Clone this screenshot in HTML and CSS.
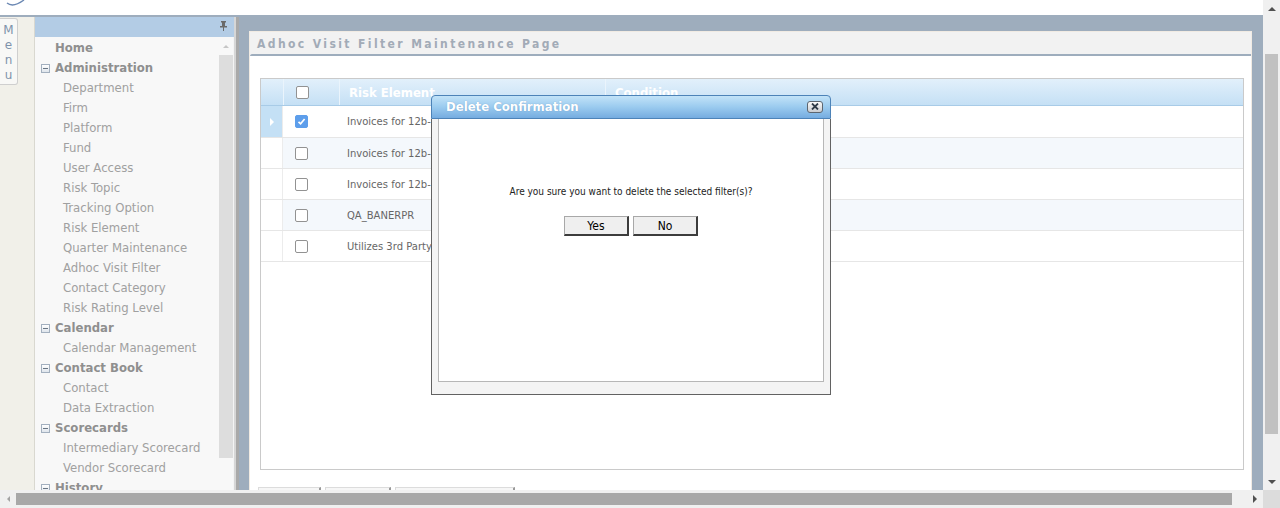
FILE: index.html
```html
<!DOCTYPE html>
<html>
<head>
<meta charset="utf-8">
<title>Adhoc Visit Filter Maintenance Page</title>
<link rel="stylesheet" href="styles.css">
</head>
<body>
<div class="viewport">
  <div class="content">
    <div class="topstrip">
      <svg class="logo" width="40" height="15" viewBox="0 0 40 15"><path d="M7 3 Q13 8 24 0" fill="none" stroke="#6b88b3" stroke-width="1.4"/></svg>
    </div>
    <div class="app">
      <div class="menucol">
        <div class="menutab"><span>M</span><span>e</span><span>n</span><span>u</span></div>
      </div>
      <div class="sidebar">
        <div class="sb-head">
          <svg class="pin" width="9" height="10" viewBox="0 0 9 10"><rect x="2" y="0" width="5" height="1.5" fill="#6a6a6a"/><rect x="3" y="1" width="3" height="4" fill="#6a6a6a"/><rect x="1" y="5" width="7" height="1.5" fill="#6a6a6a"/><rect x="4" y="6" width="1" height="4" fill="#6a6a6a"/></svg>
        </div>
        <div class="sb-body">
          <ul class="sb-list">
            <li class="sb-top">Home</li>
            <li class="sb-group"><span class="tog"></span>Administration</li>
            <li class="sb-item">Department</li>
            <li class="sb-item">Firm</li>
            <li class="sb-item">Platform</li>
            <li class="sb-item">Fund</li>
            <li class="sb-item">User Access</li>
            <li class="sb-item">Risk Topic</li>
            <li class="sb-item">Tracking Option</li>
            <li class="sb-item">Risk Element</li>
            <li class="sb-item">Quarter Maintenance</li>
            <li class="sb-item">Adhoc Visit Filter</li>
            <li class="sb-item">Contact Category</li>
            <li class="sb-item">Risk Rating Level</li>
            <li class="sb-group"><span class="tog"></span>Calendar</li>
            <li class="sb-item">Calendar Management</li>
            <li class="sb-group"><span class="tog"></span>Contact Book</li>
            <li class="sb-item">Contact</li>
            <li class="sb-item">Data Extraction</li>
            <li class="sb-group"><span class="tog"></span>Scorecards</li>
            <li class="sb-item">Intermediary Scorecard</li>
            <li class="sb-item">Vendor Scorecard</li>
            <li class="sb-group"><span class="tog"></span>History</li>
          </ul>
          <div class="sb-scroll">
            <div class="sb-up"><span class="tri-up light"></span></div>
            <div class="sb-thumb"></div>
          </div>
        </div>
      </div>
      <div class="splitter"></div>
      <div class="main">
        <div class="panel">
          <div class="panel-head">Adhoc Visit Filter Maintenance Page</div>
          <div class="panel-rule"></div>
          <div class="panel-body">
            <div class="grid">
              <div class="grow ghead">
                <div class="gi"></div>
                <div class="gc"><span class="cb"></span></div>
                <div class="gt">Risk Element</div>
                <div class="gt">Condition</div>
              </div>
              <div class="grow sel">
                <div class="gi"><span class="tri-right"></span></div>
                <div class="gc"><span class="cb on"><svg width="11" height="11" viewBox="0 0 11 11"><path d="M2.5 5.8 L4.6 7.8 L8.6 3" fill="none" stroke="#fff" stroke-width="1.7"/></svg></span></div>
                <div class="gd">Invoices for 12b-1 Fees</div>
                <div class="gd"></div>
              </div>
              <div class="grow alt">
                <div class="gi"></div>
                <div class="gc"><span class="cb"></span></div>
                <div class="gd">Invoices for 12b-1 Plan</div>
                <div class="gd"></div>
              </div>
              <div class="grow">
                <div class="gi"></div>
                <div class="gc"><span class="cb"></span></div>
                <div class="gd">Invoices for 12b-1 Other</div>
                <div class="gd"></div>
              </div>
              <div class="grow alt">
                <div class="gi"></div>
                <div class="gc"><span class="cb"></span></div>
                <div class="gd">QA_BANERPR</div>
                <div class="gd"></div>
              </div>
              <div class="grow">
                <div class="gi"></div>
                <div class="gc"><span class="cb"></span></div>
                <div class="gd">Utilizes 3rd Party</div>
                <div class="gd"></div>
              </div>
            </div>
            <div class="actions">
              <button class="act w1" aria-label="Add"></button>
              <button class="act w2" aria-label="Delete"></button>
              <button class="act w3" aria-label="Export to Excel"></button>
            </div>
          </div>
        </div>
      </div>
    </div>

    <div class="dialog">
      <div class="dlg-title">
        <span>Delete Confirmation</span>
        <span class="dlg-close"><svg width="8" height="7" viewBox="0 0 8 7"><path d="M1 0.5 L7 6.5 M7 0.5 L1 6.5" stroke="#2f3b48" stroke-width="1.8"/></svg></span>
      </div>
      <div class="dlg-body">
        <div class="dlg-inner">
          <p class="dlg-msg">Are you sure you want to delete the selected filter(s)?</p>
          <div class="dlg-btns">
            <button class="dbtn">Yes</button>
            <button class="dbtn">No</button>
          </div>
        </div>
      </div>
    </div>
  </div>

  <div class="vscroll">
    <div class="vs-up"><span class="tri-up"></span></div>
    <div class="vs-track"><div class="vs-thumb"></div></div>
    <div class="vs-down"><span class="tri-down"></span></div>
  </div>
  <div class="hscroll">
    <div class="hs-left"><span class="tri-left"></span></div>
    <div class="hs-track"><div class="hs-thumb"></div></div>
    <div class="hs-right"><span class="tri-right dark"></span></div>
  </div>
  <div class="corner"></div>
</div>
</body>
</html>
```

FILE: styles.css
```css
html, body {
  margin: 0;
  padding: 0;
}
body {
  width: 1280px;
  height: 508px;
  overflow: hidden;
  font-family: "DejaVu Sans", Verdana, sans-serif;
  background: #ffffff;
}
.viewport {
  display: grid;
  grid-template-columns: 1263px 17px;
  grid-template-rows: 490px 18px;
  width: 1280px;
  height: 508px;
}
.content {
  position: relative;
  overflow: hidden;
  display: flex;
  flex-direction: column;
}
.topstrip {
  height: 15px;
  flex: none;
  background: #ffffff;
}
.logo { display: block; }

.app {
  flex: 1;
  display: flex;
  background: #9eadbd;
  min-height: 0;
}

/* menu column */
.menucol {
  width: 34px;
  flex: none;
  margin-top: 2px;
  background: #f1f0e9;
  padding-top: 1px;
}
.menutab {
  width: 18px;
  height: 67px;
  border: 1px solid #cfcfcf;
  border-left: none;
  border-radius: 0 3px 3px 0;
  background: #f8f8f6;
  display: flex;
  flex-direction: column;
  align-items: center;
  padding-top: 4px;
  box-sizing: border-box;
}
.menutab span {
  font-family: "DejaVu Sans", sans-serif;
  font-size: 12px;
  line-height: 15px;
  color: #7f93ab;
}

/* sidebar */
.sidebar {
  width: 200px;
  flex: none;
  margin-top: 2px;
  border-left: 1px solid #d9d8d0;
  box-sizing: border-box;
  background: #f8f8f8;
  display: flex;
  flex-direction: column;
}
.sb-head {
  height: 20px;
  flex: none;
  background: #b3cce5;
  display: flex;
  justify-content: flex-end;
  align-items: center;
  padding-right: 6px;
}
.pin { display: block; margin-top: -2px; }
.sb-body {
  flex: 1;
  display: flex;
  min-height: 0;
}
.sb-list {
  list-style: none;
  margin: 0;
  padding: 1px 0 0 0;
  flex: 1;
}
.sb-list li {
  height: 20px;
  line-height: 20px;
  white-space: nowrap;
  font-family: "DejaVu Sans Condensed", "DejaVu Sans", sans-serif;
}
.sb-top {
  padding-left: 20px;
  font-weight: bold;
  font-size: 13px;
  color: #8f8f8f;
}
.sb-group {
  padding-left: 6px;
  font-weight: bold;
  font-size: 13px;
  color: #8f8f8f;
  display: flex;
  align-items: center;
}
.tog {
  width: 9px;
  height: 9px;
  box-sizing: border-box;
  border: 1px solid #a3b0bf;
  background: linear-gradient(#ffffff, #dfe5ec);
  margin-right: 5px;
  position: relative;
}
.tog::after {
  content: "";
  position: absolute;
  left: 1px;
  right: 1px;
  top: 3px;
  height: 1px;
  background: #6b7785;
}
.sb-item {
  padding-left: 28px;
  font-size: 13px;
  color: #a0a0a0;
}
.sb-scroll {
  width: 14px;
  flex: none;
  display: flex;
  flex-direction: column;
  border-right: 1px solid #f4f4f4;
}
.sb-up {
  height: 18px;
  display: flex;
  justify-content: center;
  align-items: center;
}
.sb-thumb {
  height: 403px;
  background: #dddddd;
}
.splitter {
  width: 6px;
  flex: none;
  margin-top: 2px;
  background: linear-gradient(90deg, #d6d6d6 0, #d6d6d6 2px, #a9a9a9 2px, #a9a9a9 5px, #9eadbd 5px);
}

/* main */
.main {
  flex: 1;
  padding: 16px 11px 0 9px;
  min-width: 0;
}
.panel {
  border: 1px solid #f1ebe3;
  border-bottom: none;
  background: #ffffff;
  height: 500px;
}
.panel-head {
  height: 22px;
  line-height: 24px;
  background: #f2f2f2;
  padding-left: 7px;
  font-family: "DejaVu Sans Condensed", "DejaVu Sans", sans-serif;
  font-weight: bold;
  font-size: 12px;
  letter-spacing: 2.4px;
  color: #a2abb7;
  overflow: hidden;
}
.panel-rule {
  height: 2px;
  background: #9eadbd;
  border-top-left-radius: 2px;
}
.panel-body {
  padding: 22px 7px 0 10px;
}
.grid {
  height: 392px;
  box-sizing: border-box;
  border: 1px solid #cacaca;
}
.grow {
  display: grid;
  grid-template-columns: 22px 56px 266px 1fr;
  height: 31px;
  box-sizing: border-box;
  border-bottom: 1px solid #e6e6e6;
}
.grow > div {
  display: flex;
  align-items: center;
  min-width: 0;
  overflow: hidden;
}
.ghead {
  height: 27px;
  background: linear-gradient(#e2f0fb, #c5e0f5);
  border-bottom: 1px solid #a8cbe7;
}
.ghead > div + div {
  border-left: 1px solid #eaf4fc;
}
.grow.sel {
  height: 32px;
}
.gi {
  border-right: 1px solid #ececec;
}
.ghead .gi { border-right: none; }
.gc {
  padding-left: 12px;
}
.gt {
  padding-left: 9px;
  font-family: "DejaVu Sans Condensed", "DejaVu Sans", sans-serif;
  font-weight: bold;
  font-size: 13px;
  color: #ffffff;
  white-space: nowrap;
}
.gd {
  padding-left: 8px;
  font-size: 10px;
  color: #666666;
  white-space: nowrap;
}
.alt > div:not(.gi) { background: #f4f8fc; }
.alt > div { height: 100%; }
.sel .gi {
  background: #c4e0f5;
  justify-content: center;
}
.cb {
  display: inline-flex;
  align-items: center;
  justify-content: center;
  width: 13px;
  height: 13px;
  box-sizing: border-box;
  border: 1px solid #929292;
  border-radius: 2px;
  background: #ffffff;
}
.cb.on {
  background: #5d9eeb;
  border-color: #5d9eeb;
}
.cb svg { display: block; }

.tri-right {
  width: 0;
  height: 0;
  border-top: 4px solid transparent;
  border-bottom: 4px solid transparent;
  border-left: 4px solid #ffffff;
}
.tri-right.dark { border-left-color: #505050; }
.tri-left {
  width: 0;
  height: 0;
  border-top: 3px solid transparent;
  border-bottom: 3px solid transparent;
  border-right: 3px solid #a3a3a3;
}
.tri-up {
  width: 0;
  height: 0;
  border-left: 4px solid transparent;
  border-right: 4px solid transparent;
  border-bottom: 4px solid #505050;
}
.tri-up.light { border-bottom-color: #c6c6c6; border-left-width: 3px; border-right-width: 3px; border-bottom-width: 3px; }
.tri-down {
  width: 0;
  height: 0;
  border-left: 4px solid transparent;
  border-right: 4px solid transparent;
  border-top: 4px solid #505050;
}

.actions {
  display: flex;
  gap: 4px;
  margin: 17px 0 0 -2px;
}
.act {
  height: 22px;
  border: 1px solid #dcdcdc;
  border-right: 2px solid #9a9a9a;
  background: #f6f6f6;
  padding: 0;
}
.w1 { width: 63px; }
.w2 { width: 66px; }
.w3 { width: 120px; }

/* dialog */
.dialog {
  position: absolute;
  left: 431px;
  top: 95px;
  width: 400px;
  height: 300px;
  display: flex;
  flex-direction: column;
}
.dlg-title {
  height: 24px;
  box-sizing: border-box;
  border: 1px solid #4d83b8;
  border-radius: 4px 4px 0 0;
  background: linear-gradient(#c2e3f8, #9bcbef 50%, #75ace0);
  display: flex;
  align-items: center;
  justify-content: space-between;
  padding: 0 7px 1px 14px;
  font-family: "DejaVu Sans Condensed", "DejaVu Sans", sans-serif;
  font-weight: bold;
  font-size: 13px;
  color: #ffffff;
  text-shadow: 0 0 1px rgba(60, 110, 160, 0.5);
}
.dlg-close {
  width: 16px;
  height: 12px;
  box-sizing: border-box;
  border: 1px solid #5d6670;
  border-radius: 3px;
  background: linear-gradient(#fbfbfb, #c9ccd0);
  display: flex;
  align-items: center;
  justify-content: center;
}
.dlg-close svg { display: block; }
.dlg-body {
  flex: 1;
  background: #f4f4f4;
  border: 1px solid #626262;
  border-top: none;
  padding: 0 6px 12px 6px;
  display: flex;
}
.dlg-inner {
  flex: 1;
  background: #ffffff;
  border: 1px solid #b7b7b7;
  border-top: none;
  display: flex;
  flex-direction: column;
  align-items: center;
}
.dlg-msg {
  margin: 66px 0 0 0;
  line-height: 13px;
  font-family: "DejaVu Sans Condensed", "DejaVu Sans", sans-serif;
  font-size: 10px;
  color: #222222;
}
.dlg-btns {
  display: flex;
  gap: 4px;
  margin-top: 18px;
}
.dbtn {
  width: 65px;
  height: 20px;
  box-sizing: border-box;
  padding: 0;
  background: #efefef;
  border-style: solid;
  border-width: 1px 2px 2px 1px;
  border-color: #a8a8a8 #3c3c3c #3c3c3c #a8a8a8;
  font-family: "DejaVu Sans Condensed", "DejaVu Sans", sans-serif;
  font-size: 12px;
  color: #000000;
}

/* page scrollbars */
.vscroll {
  background: #f0f0f0;
  display: flex;
  flex-direction: column;
}
.vs-up, .vs-down {
  height: 17px;
  display: flex;
  align-items: center;
  justify-content: center;
}
.vs-track {
  flex: 1;
  padding: 37px 2px 0 2px;
}
.vs-thumb {
  height: 380px;
  background: #c1c1c1;
}
.hscroll {
  background: #f0f0f0;
  display: flex;
  align-items: center;
}
.hs-left, .hs-right {
  width: 16px;
  height: 18px;
  display: flex;
  align-items: center;
  justify-content: center;
}
.hs-track {
  flex: 1;
  height: 18px;
  padding: 3px 0;
  box-sizing: border-box;
}
.hs-thumb {
  height: 12px;
  width: 1216px;
  background: #a8a8a8;
}
.corner {
  background: #dcdcdc;
}
```
